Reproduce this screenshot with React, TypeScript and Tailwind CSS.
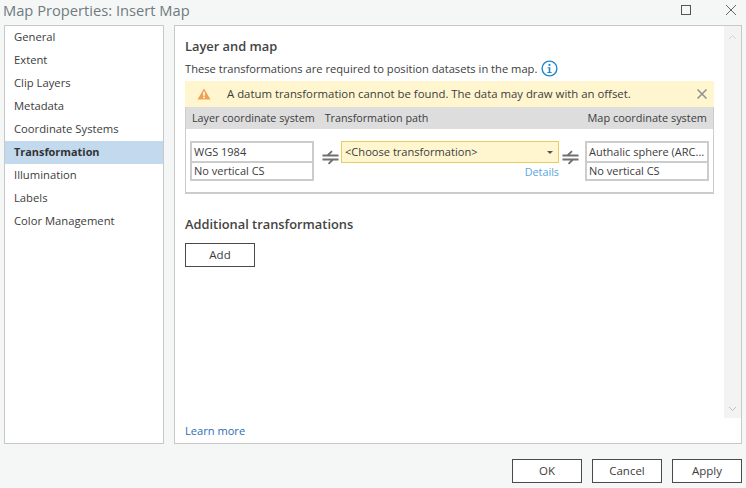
import React from 'react';

const navItems = ['General', 'Extent', 'Clip Layers', 'Metadata', 'Coordinate Systems', 'Transformation', 'Illumination', 'Labels', 'Color Management'];

const SwapIcon = () => (
  <svg width="17" height="15" viewBox="0 0 17 15" className="shrink-0">
    <path d="M0.5 5.5H16.5M5.5 5.5L10 1.2" fill="none" stroke="#707070" strokeWidth="1.8" />
    <path d="M0.5 9.5H16.5M11 9.5L6.5 13.8" fill="none" stroke="#707070" strokeWidth="1.8" />
  </svg>
);

const CsBox = ({ top, bottom }: { top: string; bottom: string }) => (
  <div className="w-[124px] h-10 border-2 border-[#cccccc] bg-white flex flex-col text-[11px] text-[#3c3c3c] shrink-0">
    <div className="h-[18px] pl-[2px] leading-[17px] whitespace-nowrap">{top}</div>
    <div className="h-[2px] bg-[#cccccc] shrink-0" />
    <div className="h-[16px] pl-[2px] leading-[16px] whitespace-nowrap">{bottom}</div>
  </div>
);

const FooterButton = ({ label }: { label: string }) => (
  <button className="w-[70px] h-6 border border-[#4a4a4a] bg-white text-[11.5px] text-[#3c3c3c]">{label}</button>
);

export default function App() {
  return (
    <div className="w-[746px] h-[488px] bg-[#f5f7f6] flex flex-col overflow-hidden text-[11.25px] text-[#3c3c3c]" style={{ fontFamily: '"Open Sans", "Noto Sans", sans-serif' }}>
      <div className="h-[25px] flex items-center justify-between pl-[3px] pr-[9px] shrink-0">
        <span className="text-[14.7px] text-[#6f7b80] leading-[20px] -mt-[5px] whitespace-nowrap">Map Properties: Insert Map</span>
        <div className="flex items-center gap-[34px] -mt-[5px]">
          <div className="w-[10px] h-[10px] border border-[#555]" />
          <svg width="12" height="12" viewBox="0 0 12 12">
            <path d="M1 1L11 11M11 1L1 11" stroke="#666" strokeWidth="1" fill="none" />
          </svg>
        </div>
      </div>

      <div className="flex h-[419px] pl-1 pr-1 gap-[10px] shrink-0">
        <div className="w-[160px] bg-white border border-[#c8c8c8] shrink-0">
          {navItems.map((item) => (
            <div key={item} className={`h-[23px] pl-[9px] flex items-center leading-none ${item === 'Transformation' ? 'bg-[#c3d9ed] font-bold text-[10.9px] text-[#333]' : ''}`}>
              <span className={item === 'Transformation' ? '' : '-translate-y-[1px]'}>{item}</span>
            </div>
          ))}
        </div>

        <div className="flex-1 bg-white border border-[#c8c8c8] flex min-w-0">
          <div className="flex-1 pl-[10px] pr-[10px] flex flex-col min-w-0">
            <div className="mt-[10px] text-[12.85px] leading-[20px] font-semibold text-[#444]">Layer and map</div>
            <div className="mt-[3px] h-[19px] flex items-center gap-[4px] leading-none text-[11.15px]">
              <span>These transformations are required to position datasets in the map.</span>
              <svg width="17" height="17" viewBox="0 0 17 17">
                <circle cx="8.5" cy="8.5" r="7.4" fill="none" stroke="#1f88c9" strokeWidth="1.4" />
                <circle cx="8.5" cy="4.9" r="1.1" fill="#1f88c9" />
                <path d="M6.6 7.2H9.3V12H10.6V13H6.4V12H7.7V8.2H6.6Z" fill="#1f88c9" />
              </svg>
            </div>

            <div className="mt-[3px] h-[26px] bg-[#fff6d0] flex items-center pl-[12px] pr-[7px]">
              <svg width="14" height="12" viewBox="0 0 14 12" className="shrink-0">
                <path d="M7 0.5L13.5 11.5H0.5Z" fill="#efa054" />
                <rect x="6.2" y="3.8" width="1.6" height="4" fill="#fff" />
                <rect x="6.2" y="8.7" width="1.6" height="1.6" fill="#fff" />
              </svg>
              <span className="ml-[16px] flex-1 whitespace-nowrap leading-none text-[11.37px]">A datum transformation cannot be found. The data may draw with an offset.</span>
              <svg width="10" height="10" viewBox="0 0 10 10" className="shrink-0">
                <path d="M0.5 0.5L9.5 9.5M9.5 0.5L0.5 9.5" stroke="#8f8f8f" strokeWidth="1.5" fill="none" />
              </svg>
            </div>

            <div className="h-[87px] border-x border-b-2 border-[#cccccc]">
              <div className="h-[22px] pt-[1px] bg-[#dddddd] flex items-center justify-between pl-[6px] pr-[6px] leading-none text-[10.75px]">
                <div className="flex gap-[10px]">
                  <span>Layer coordinate system</span>
                  <span>Transformation path</span>
                </div>
                <span className="text-[10.95px]">Map coordinate system</span>
              </div>
              <div className="flex pl-[4px] pt-[12px]">
                <CsBox top="WGS 1984" bottom="No vertical CS" />
                <div className="ml-[8px] mt-[9px]"><SwapIcon /></div>
                <div className="ml-[2px] w-[218px] shrink-0">
                  <div className="h-[22px] bg-[#fff6d0] border border-[#e6cf5f] flex items-center justify-between pl-[3px] pr-[5px] leading-none text-[11.1px]">
                    <span>&lt;Choose transformation&gt;</span>
                    <svg width="6" height="3" viewBox="0 0 6 3"><path d="M0 0H6L3 3Z" fill="#555" /></svg>
                  </div>
                  <div className="text-right text-[#5aa5dc] leading-[18px] text-[10.8px]">Details</div>
                </div>
                <div className="ml-[3px] mt-[9px]"><SwapIcon /></div>
                <div className="ml-[6px]">
                  <CsBox top="Authalic sphere (ARC..." bottom="No vertical CS" />
                </div>
              </div>
            </div>

            <div className="mt-[20px] text-[12.85px] leading-[20px] font-semibold text-[#444]">Additional transformations</div>
            <button className="mt-[9px] w-[70px] h-6 border border-[#4a4a4a] bg-white text-[11.5px]">Add</button>
            <div className="mt-auto mb-[3px] text-[#2b6cb8] leading-[18px] text-[11.1px]">Learn more</div>
          </div>

          <div className="w-[17px] bg-[#f3f3f3] shrink-0 flex flex-col justify-between items-center h-[392px]">
            <svg width="9" height="6" viewBox="0 0 9 6" className="mt-[8px]"><path d="M1 5L4.5 1.5L8 5" stroke="#d5d5d5" fill="none" /></svg>
            <svg width="9" height="6" viewBox="0 0 9 6" className="mb-[6px]"><path d="M1 1L4.5 4.5L8 1" stroke="#c0c0c0" fill="none" /></svg>
          </div>
        </div>
      </div>

      <div className="flex justify-end gap-[10px] pr-1 pt-[15px]">
        <FooterButton label="OK" />
        <FooterButton label="Cancel" />
        <FooterButton label="Apply" />
      </div>
    </div>
  );
}
